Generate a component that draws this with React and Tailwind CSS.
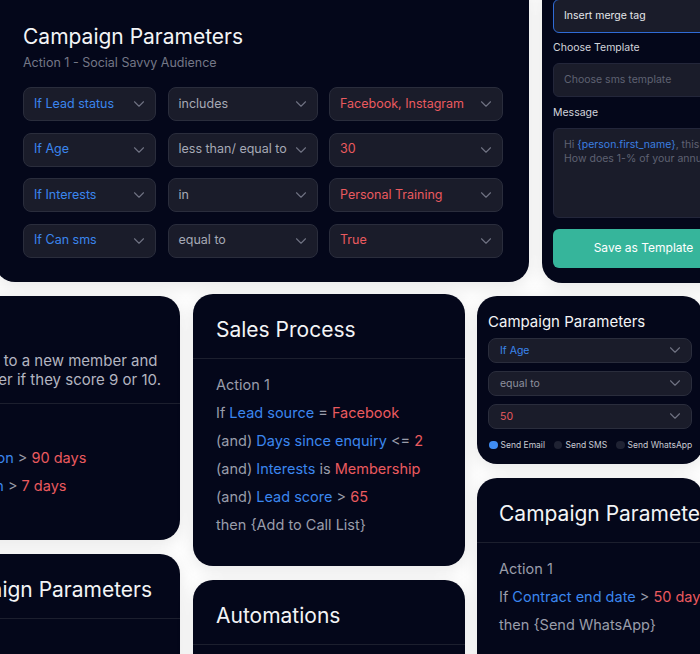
import React from "react";
import { ChevronDown } from "lucide-react";

const BLUE = "text-[#3b86ee]";
const RED = "text-[#ea5a5f]";
const GRAY = "text-[#9a9daa]";

function Sel({ text, color, h = "h-[34px]", size = "text-[12.5px]", pl = "pl-[10px]" }) {
  return (
    <div className={`${h} rounded-[8px] border border-[#2a2d3c] bg-[#1a1c2a] flex items-center justify-between ${pl} pr-[7px]`}>
      <span className={`${size} ${color} whitespace-nowrap`}>{text}</span>
      <ChevronDown size={18} strokeWidth={1.5} className="text-[#6f7282] shrink-0" />
    </div>
  );
}

function Card({ className = "", children }) {
  return (
    <div className={`bg-[#04071a] rounded-[20px] shadow-[0_4px_18px_rgba(0,0,0,0.10)] overflow-hidden shrink-0 ${className}`}>
      {children}
    </div>
  );
}

function Header({ title, pl = "pl-[23px]" }) {
  return (
    <div className={`${pl} pt-[22px] pb-[14px] border-b border-[#1c1f2e]`}>
      <div className="text-[21px] leading-[28px] text-[#f3f4f6] whitespace-nowrap">{title}</div>
    </div>
  );
}

function Line({ children }) {
  return <div className={`text-[14.5px] leading-[28px] whitespace-nowrap ${GRAY}`}>{children}</div>;
}

const B = ({ children }) => <span className={BLUE}>{children}</span>;
const R = ({ children }) => <span className={RED}>{children}</span>;

function Radio({ on, label }) {
  return (
    <div className="flex items-center gap-[3px]">
      <span className={`w-[8.5px] h-[8.5px] rounded-full ${on ? "bg-[#3f8cf2]" : "bg-[#1f2233]"}`} />
      <span className="text-[8.5px] text-[#c9cbd3] whitespace-nowrap">{label}</span>
    </div>
  );
}

export default function App() {
  return (
    <div className="w-[700px] h-[654px] overflow-hidden bg-white font-['Inter',sans-serif]">
      {/* top row */}
      <div className="flex items-start gap-[13px] -mt-[20px] -ml-[5px]">
        <Card className="w-[534px] pl-[28px] pt-[43px] pb-[24.5px]">
          <div className="text-[21px] leading-[28px] text-[#f3f4f6]">Campaign Parameters</div>
          <div className="mt-[3px] text-[12.5px] leading-[18px] text-[#747787]">Action 1 - Social Savvy Audience</div>
          <div className="mt-[15px] grid grid-cols-[133px_150px_174px] gap-[11.5px]">
            <Sel text="If Lead status" color={BLUE} />
            <Sel text="includes" color="text-[#a6a9b5]" />
            <Sel text="Facebook, Instagram" color={RED} />
            <Sel text="If Age" color={BLUE} />
            <Sel text="less than/ equal to" color="text-[#a6a9b5]" />
            <Sel text="30" color={RED} />
            <Sel text="If Interests" color={BLUE} />
            <Sel text="in" color="text-[#a6a9b5]" />
            <Sel text="Personal Training" color={RED} />
            <Sel text="If Can sms" color={BLUE} />
            <Sel text="equal to" color="text-[#a6a9b5]" />
            <Sel text="True" color={RED} />
          </div>
        </Card>
        <Card className="w-[203px] px-[11px] pt-[19px] pb-[15.3px]">
          <div className="h-[34px] rounded-[6px] border border-[#2f6bd6] bg-[#1a1c2a] flex items-center pl-[10px]">
            <span className="text-[10.5px] text-[#e5e7eb] whitespace-nowrap">Insert merge tag</span>
          </div>
          <div className="mt-[7px] text-[10.5px] leading-[16px] text-[#d3d5dc]">Choose Template</div>
          <div className="mt-[7px] h-[34px] rounded-[6px] border border-[#23263a] bg-[#1a1c2a] flex items-center pl-[10px]">
            <span className="text-[10.5px] text-[#5f6272] whitespace-nowrap">Choose sms template</span>
          </div>
          <div className="mt-[8px] text-[10.5px] leading-[16px] text-[#d3d5dc]">Message</div>
          <div className="mt-[6.7px] h-[90px] rounded-[6px] border border-[#23263a] bg-[#1a1c2a] pl-[10px] pt-[9px]">
            <div className="text-[10.5px] leading-[14px] text-[#5f6272] whitespace-nowrap">
              Hi <span className="text-[#3b7fe0]">{"{person.first_name}"}</span>, this is Coach Sam.
            </div>
            <div className="text-[10.5px] leading-[14px] text-[#5f6272] whitespace-nowrap">
              How does 1-% of your annual membership sound?
            </div>
          </div>
          <div className="mt-[11.3px] h-[38.7px] rounded-[6px] bg-[#36b59b] flex items-center justify-center">
            <span className="text-[12px] text-white whitespace-nowrap">Save as Template</span>
          </div>
        </Card>
      </div>

      {/* bottom row */}
      <div className="flex items-start mt-[11px] -ml-[179px]">
        {/* column 1 */}
        <div className="w-[359px] shrink-0 mt-[2px] flex flex-col items-end gap-[14px]">
          <Card className="w-full h-[244px]">
            <div className="pl-[23px] pt-[22px] pb-[13.5px] border-b border-[#1c1f2e]">
              <div className="text-[21px] leading-[28px] text-[#f3f4f6] whitespace-nowrap">NPS Survey</div>
              <div className="mt-[5.5px] text-[15px] leading-[19px] text-[#b3b5c0] whitespace-nowrap">
                <div>Send our NPS poll out to a new member and</div>
                <div>ask them to review later if they score 9 or 10.</div>
              </div>
            </div>
            <div className="pl-[23px] pt-[12px]">
              <Line>Action 1</Line>
              <Line>If <B>Days since registration</B> &gt; <R>90 days</R></Line>
              <Line>(and) <B>Since last Lesson</B> &gt; <R>7 days</R></Line>
            </div>
          </Card>
          <Card className="w-[271px] h-[140px]">
            <Header title="Campaign Parameters" />
            <div className="pl-[23px] pt-[12px]">
              <Line>Action 1</Line>
              <Line>If <B>Lead status</B> = <R>Lost</R></Line>
            </div>
          </Card>
        </div>

        {/* column 2 */}
        <div className="w-[272px] shrink-0 ml-[13px] flex flex-col gap-[14px]">
          <Card className="w-full pb-[27px]">
            <Header title="Sales Process" />
            <div className="pl-[23px] pt-[12px]">
              <Line>Action 1</Line>
              <Line>If <B>Lead source</B> = <R>Facebook</R></Line>
              <Line>(and) <B>Days since enquiry</B> &lt;= <R>2</R></Line>
              <Line>(and) <B>Interests</B> is <R>Membership</R></Line>
              <Line>(and) <B>Lead score</B> &gt; <R>65</R></Line>
              <Line>then {"{Add to Call List}"}</Line>
            </div>
          </Card>
          <Card className="w-full h-[140px]">
            <Header title="Automations" />
            <div className="pl-[23px] pt-[12px]">
              <Line>Action 1</Line>
              <Line>If <B>Membership</B> = <R>Paused</R></Line>
            </div>
          </Card>
        </div>

        {/* column 3 */}
        <div className="w-[226px] shrink-0 ml-[12px] mt-[2px] flex flex-col gap-[14px]">
          <Card className="w-full px-[11px] pt-[16px] pb-[12px]">
            <div className="text-[15px] leading-[20px] text-[#f3f4f6] whitespace-nowrap">Campaign Parameters</div>
            <div className="mt-[6px] flex flex-col gap-[8px]">
              <Sel text="If Age" color={BLUE} h="h-[25px]" size="text-[10.5px]" pl="pl-[11px]" />
              <Sel text="equal to" color="text-[#8e919e]" h="h-[25px]" size="text-[10.5px]" pl="pl-[11px]" />
              <Sel text="50" color={RED} h="h-[25px]" size="text-[10.5px]" pl="pl-[11px]" />
            </div>
            <div className="mt-[9px] h-[14px] flex items-center gap-[9px] pl-[1px]">
              <Radio on label="Send Email" />
              <Radio label="Send SMS" />
              <Radio label="Send WhatsApp" />
            </div>
          </Card>
          <Card className="w-full h-[200px]">
            <Header title="Campaign Parameters" pl="pl-[22px]" />
            <div className="pl-[22px] pt-[12px]">
              <Line>Action 1</Line>
              <Line>If <B>Contract end date</B> &gt; <R>50 days</R></Line>
              <Line>then {"{Send WhatsApp}"}</Line>
            </div>
          </Card>
        </div>
      </div>
    </div>
  );
}
